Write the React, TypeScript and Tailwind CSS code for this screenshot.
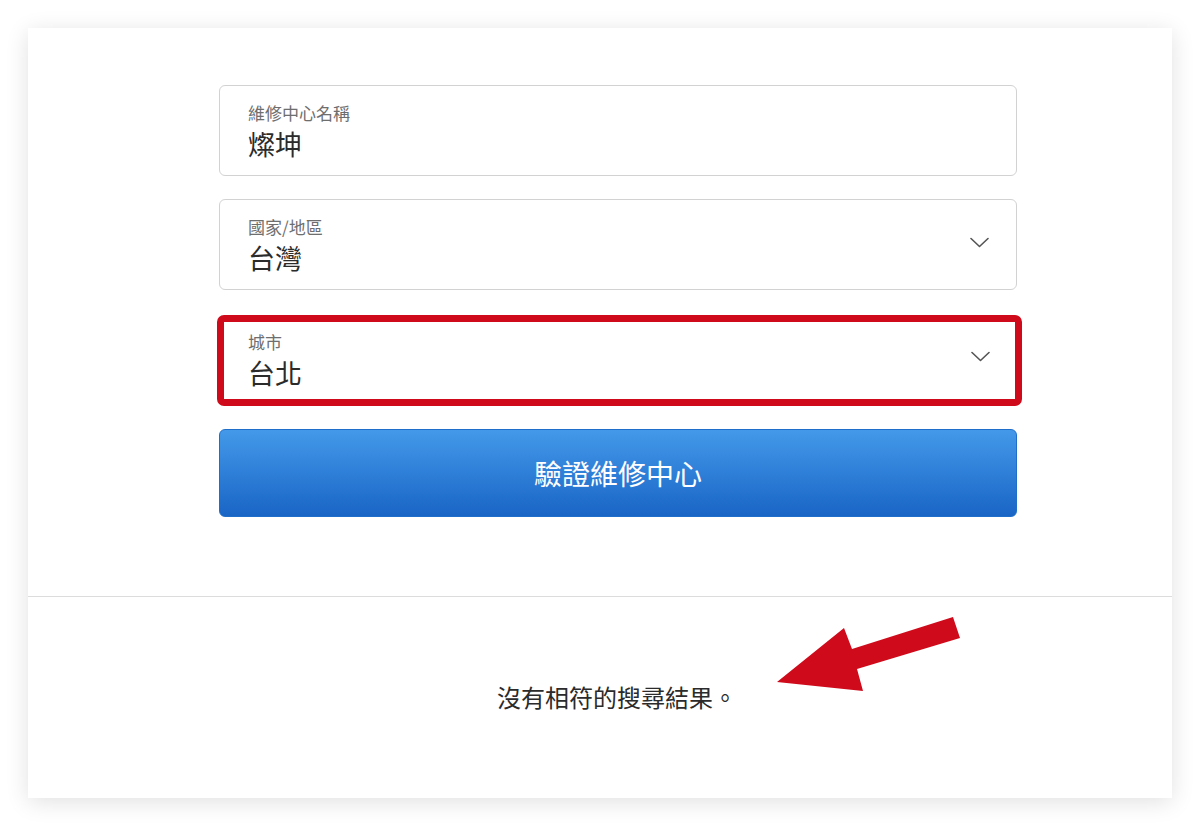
const font = { fontFamily: '"Noto Sans CJK TC", "Noto Sans", sans-serif' };

const Chevron = ({ className }: any) => (
  <svg className={className} width="19" height="11" viewBox="0 0 19 11" fill="none">
    <polyline points="1,1.5 9.5,9.5 18,1.5" stroke="#555" strokeWidth="1.6" strokeLinecap="round" strokeLinejoin="round" />
  </svg>
);

const Field = ({ label, value, select, highlight }: any) => (
  <div
    className={
      highlight
        ? "relative h-[91px] w-[805px] -ml-[2px] rounded-[7px] border-[7px] border-[#cf0a1b] bg-white pl-[24px] pt-[8px]"
        : "relative h-[91px] w-[798px] rounded-[6px] border border-[#d2d2d2] bg-white pl-[28px] pt-[15px]"
    }
  >
    <div className="h-[24px] text-[17px] leading-[24px] text-[#6e6e6e]">{label}</div>
    <div className="h-[38px] text-[27px] leading-[38px] text-[#2b2b2b]">{value}</div>
    {select && (
      <Chevron
        className={
          highlight
            ? "absolute right-[25px] top-[29px]"
            : "absolute right-[27px] top-[37px]"
        }
      />
    )}
  </div>
);

export default function App() {
  return (
    <div className="relative min-h-[827px] w-[1200px] bg-white p-[28px]" style={font}>
      <div className="h-[770px] w-[1144px] bg-white shadow-[0_4px_22px_rgba(0,0,0,0.12)]">
        <div className="flex h-[569px] flex-col gap-[23px] border-b border-[#dcdcdc] pl-[191px] pt-[57px]">
          <Field label="維修中心名稱" value="燦坤" />
          <Field label="國家/地區" value="台灣" select />
          <div className="mt-[2px]">
            <Field label="城市" value="台北" select highlight />
          </div>
          <button className="flex h-[88px] w-[798px] items-center justify-center rounded-[6px] border border-[#1f6fca] bg-gradient-to-b from-[#4499e9] to-[#1965c6] text-[28px] text-white">
            驗證維修中心
          </button>
        </div>
        <div className="flex h-[200px] items-center justify-center pl-[34px]">
          <span className="text-[24px] text-[#2b2b2b]">沒有相符的搜尋結果。</span>
        </div>
      </div>
      <svg className="pointer-events-none absolute left-0 top-0" width="1200" height="827">
        <polygon
          points="777,682 844,628 852,649 953,617 960,638 857,669 863,691"
          fill="#cf0a1b"
        />
      </svg>
    </div>
  );
}
